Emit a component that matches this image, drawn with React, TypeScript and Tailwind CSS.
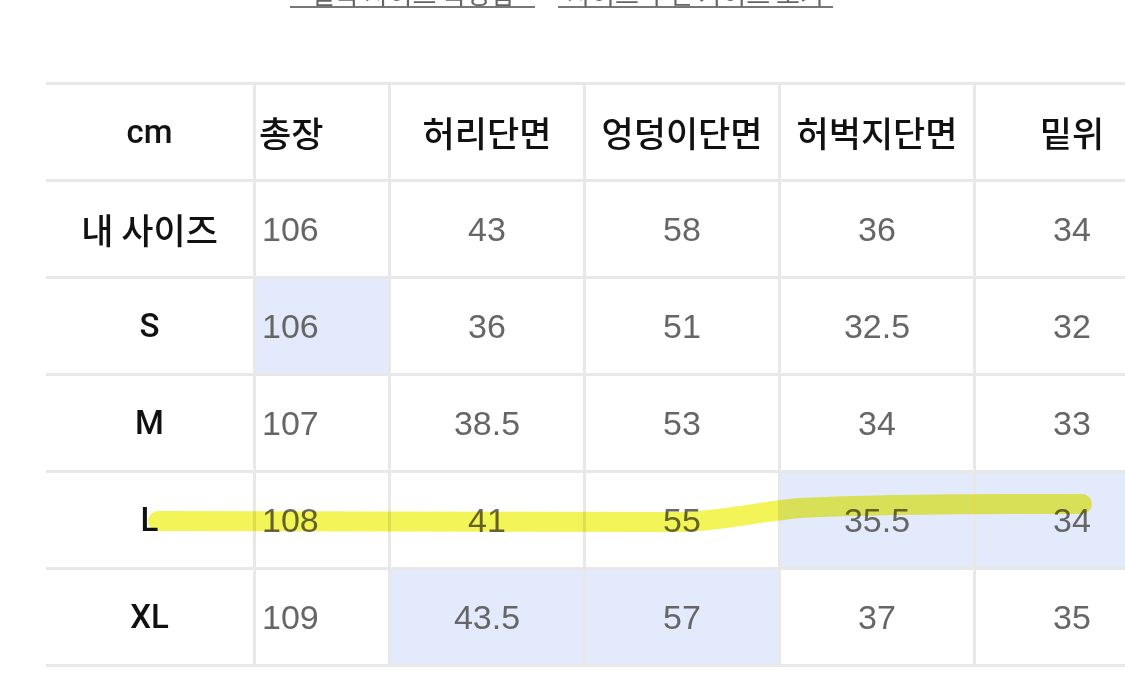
import React from "react";

type Cell = { v: string; hl?: boolean };

const COLS = ["총장", "허리단면", "엉덩이단면", "허벅지단면", "밑위"];

const ROWS: { label: string; cells: Cell[] }[] = [
  { label: "내 사이즈", cells: [{ v: "106" }, { v: "43" }, { v: "58" }, { v: "36" }, { v: "34" }] },
  { label: "S", cells: [{ v: "106", hl: true }, { v: "36" }, { v: "51" }, { v: "32.5" }, { v: "32" }] },
  { label: "M", cells: [{ v: "107" }, { v: "38.5" }, { v: "53" }, { v: "34" }, { v: "33" }] },
  { label: "L", cells: [{ v: "108" }, { v: "41" }, { v: "55" }, { v: "35.5", hl: true }, { v: "34", hl: true }] },
  { label: "XL", cells: [{ v: "109" }, { v: "43.5", hl: true }, { v: "57", hl: true }, { v: "37" }, { v: "35" }] },
];

const labelFont = "font-['Roboto','Noto_Sans_CJK_KR',sans-serif] font-medium text-[#111]";
const krFont = "font-['Noto_Sans_CJK_KR',sans-serif] font-medium text-[35px] text-[#111]";
const numFont = "font-['Liberation_Sans','Noto_Sans_CJK_KR',sans-serif] text-[34px] text-[#666]";

const Row: React.FC<{ children: React.ReactNode; last?: boolean }> = ({ children, last }) => (
  <div
    className={`flex h-[97px] border-t-[3px] border-[#e8e8e8] ${last ? "h-[100px] border-b-[3px]" : ""}`}
  >
    {children}
  </div>
);

const App: React.FC = () => {
  return (
    <div className="relative w-[1125px] h-[695px] overflow-hidden bg-white">
      {/* links cut off at the top */}
      <div className="flex h-[8px] items-end overflow-hidden font-['Noto_Sans_CJK_KR',sans-serif] text-[26px] text-[#666]">
        <span className="ml-[290px] w-[245px] leading-[26px] border-b-[2px] border-[#777] text-center">
          실측 사이즈 측정법
        </span>
        <span className="ml-[23px] w-[275px] leading-[26px] border-b-[2px] border-[#777] text-center">
          사이즈 추천 가이드 보기
        </span>
      </div>

      <div className="ml-[46px] mt-[74px] w-[1130px]">
        <Row>
          <div className={`w-[207px] flex items-center justify-center text-[33px] ${labelFont}`}>cm</div>
          {COLS.map((c, i) => (
            <div
              key={c}
              className={`${i === 0 ? "w-[135px] justify-start pl-[3px]" : "w-[195px] justify-center"} flex items-center border-l-[3px] border-[#e8e8e8] ${krFont}`}
            >
              {c}
            </div>
          ))}
        </Row>
        {ROWS.map((r, ri) => (
          <Row key={r.label} last={ri === ROWS.length - 1}>
            <div
              className={`w-[207px] flex items-center justify-center ${
                r.label === "내 사이즈" ? krFont : `text-[33px] ${labelFont}`
              }`}
            >
              {r.label}
            </div>
            {r.cells.map((c, i) => (
              <div
                key={i}
                className={`${i === 0 ? "w-[135px] justify-start pl-[6px]" : "w-[195px] justify-center"} flex items-center border-l-[3px] border-[#e8e8e8] ${
                  c.hl ? "bg-[#e3eafb]" : ""
                } ${numFont}`}
              >
                {c.v}
              </div>
            ))}
          </Row>
        ))}
      </div>

      {/* yellow marker stroke */}
      <svg
        className="absolute left-0 top-0 pointer-events-none mix-blend-multiply"
        width="1125"
        height="695"
        viewBox="0 0 1125 695"
      >
        <path
          d="M158 521 L680 522 C725 521 755 512 800 508 C900 503 1000 504 1082 504"
          fill="none"
          stroke="#f0f240"
          strokeOpacity="0.88"
          strokeWidth="20"
          strokeLinecap="round"
          strokeLinejoin="round"
        />
      </svg>
    </div>
  );
};

export default App;
